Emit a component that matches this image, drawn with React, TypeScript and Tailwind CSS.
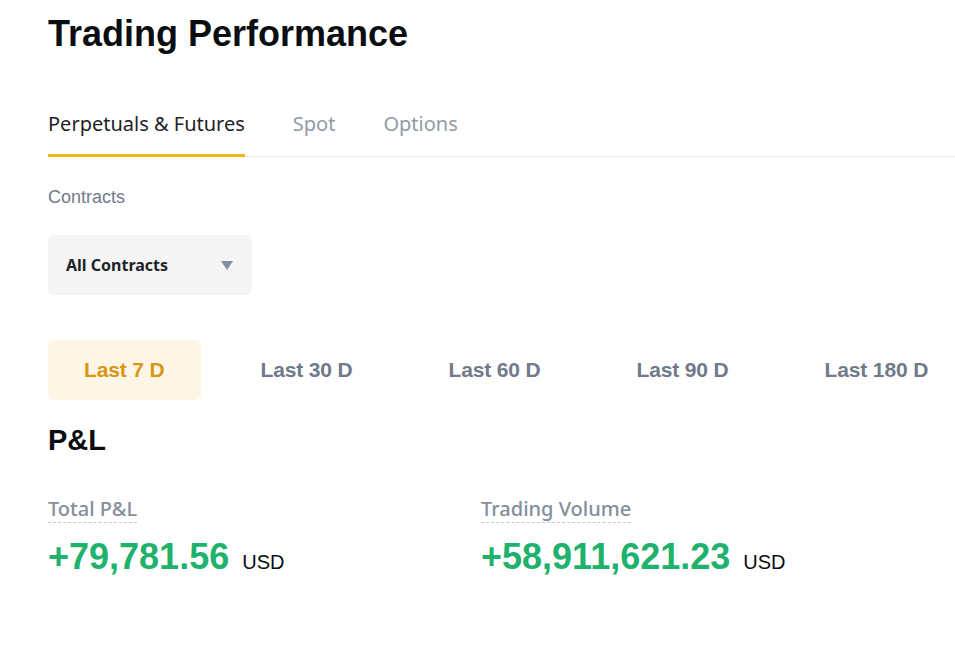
import { useState } from 'react'

const periods = ['Last 7 D', 'Last 30 D', 'Last 60 D', 'Last 90 D', 'Last 180 D']
const tabs = ['Perpetuals & Futures', 'Spot', 'Options']

const arial = { fontFamily: '"Liberation Sans", Arial, sans-serif' }

export default function App() {
  const [tab, setTab] = useState(0)
  const [period, setPeriod] = useState(0)

  return (
    <div className="w-[955px] h-[656px] overflow-hidden bg-white pl-12 text-[#1e2329]"
      style={{ fontFamily: '"Noto Sans", "Open Sans", sans-serif' }}>
      <h1 className="pt-[12px] text-[36px] leading-[44px] font-bold text-[#0b0e11]" style={arial}>
        Trading Performance
      </h1>

      {/* Tabs */}
      <div className="mt-[54px] flex gap-12 border-b border-[#eaecef]">
        {tabs.map((t, i) => (
          <button key={t} onClick={() => setTab(i)}
            className={`relative pb-[19px] text-[20px] leading-[27px] ${i === tab ? 'text-[#1e2329]' : 'text-[#929aa5]'}`}>
            {t}
            {i === tab && <span className="absolute left-0 right-0 -bottom-px h-[3px] bg-[#f0b90b]" />}
          </button>
        ))}
      </div>

      <p className="mt-[29px] text-[18px] leading-[22px] text-[#707a8a]" style={arial}>Contracts</p>

      <button className="mt-[27px] flex h-[60px] w-[204px] items-center justify-between rounded-md bg-[#f5f5f5] pl-[18px] pr-[19px]">
        <span className="text-[16px] font-bold text-[#1e2329]">All Contracts</span>
        <svg width="12" height="9" viewBox="0 0 12 9">
          <path d="M0 0h12L6 9z" fill="#848e9c" />
        </svg>
      </button>

      {/* Period selector */}
      <div className="mt-[45px] flex gap-6">
        {periods.map((p, i) => (
          <button key={p} onClick={() => setPeriod(i)}
            className={`h-[60px] shrink-0 whitespace-nowrap rounded-md px-[36px] text-[21px] font-bold tracking-[-0.15px]
              ${i === period ? 'bg-[#fef6e4] text-[#d89614]' : 'text-[#707a8a]'}`}
            style={arial}>
            {p}
          </button>
        ))}
      </div>

      <h2 className="mt-[22px] text-[29px] leading-[36px] font-bold text-[#0b0e11]" style={arial}>P&amp;L</h2>

      <div className="mt-[38px] flex">
        {[
          { label: 'Total P&L', value: '+79,781.56' },
          { label: 'Trading Volume', value: '+58,911,621.23' },
        ].map(s => (
          <div key={s.label} className="w-[433px]">
            <span className="border-b border-dashed border-[#c5cad1] text-[20px] leading-[26px] text-[#848e9c] font-medium">
              {s.label}
            </span>
            <div className="mt-[13px] flex items-baseline gap-[13px]" style={arial}>
              <span className="text-[36px] leading-[44px] font-bold text-[#20b26c]">{s.value}</span>
              <span className="text-[20px] text-[#0b0e11]">USD</span>
            </div>
          </div>
        ))}
      </div>
    </div>
  )
}
